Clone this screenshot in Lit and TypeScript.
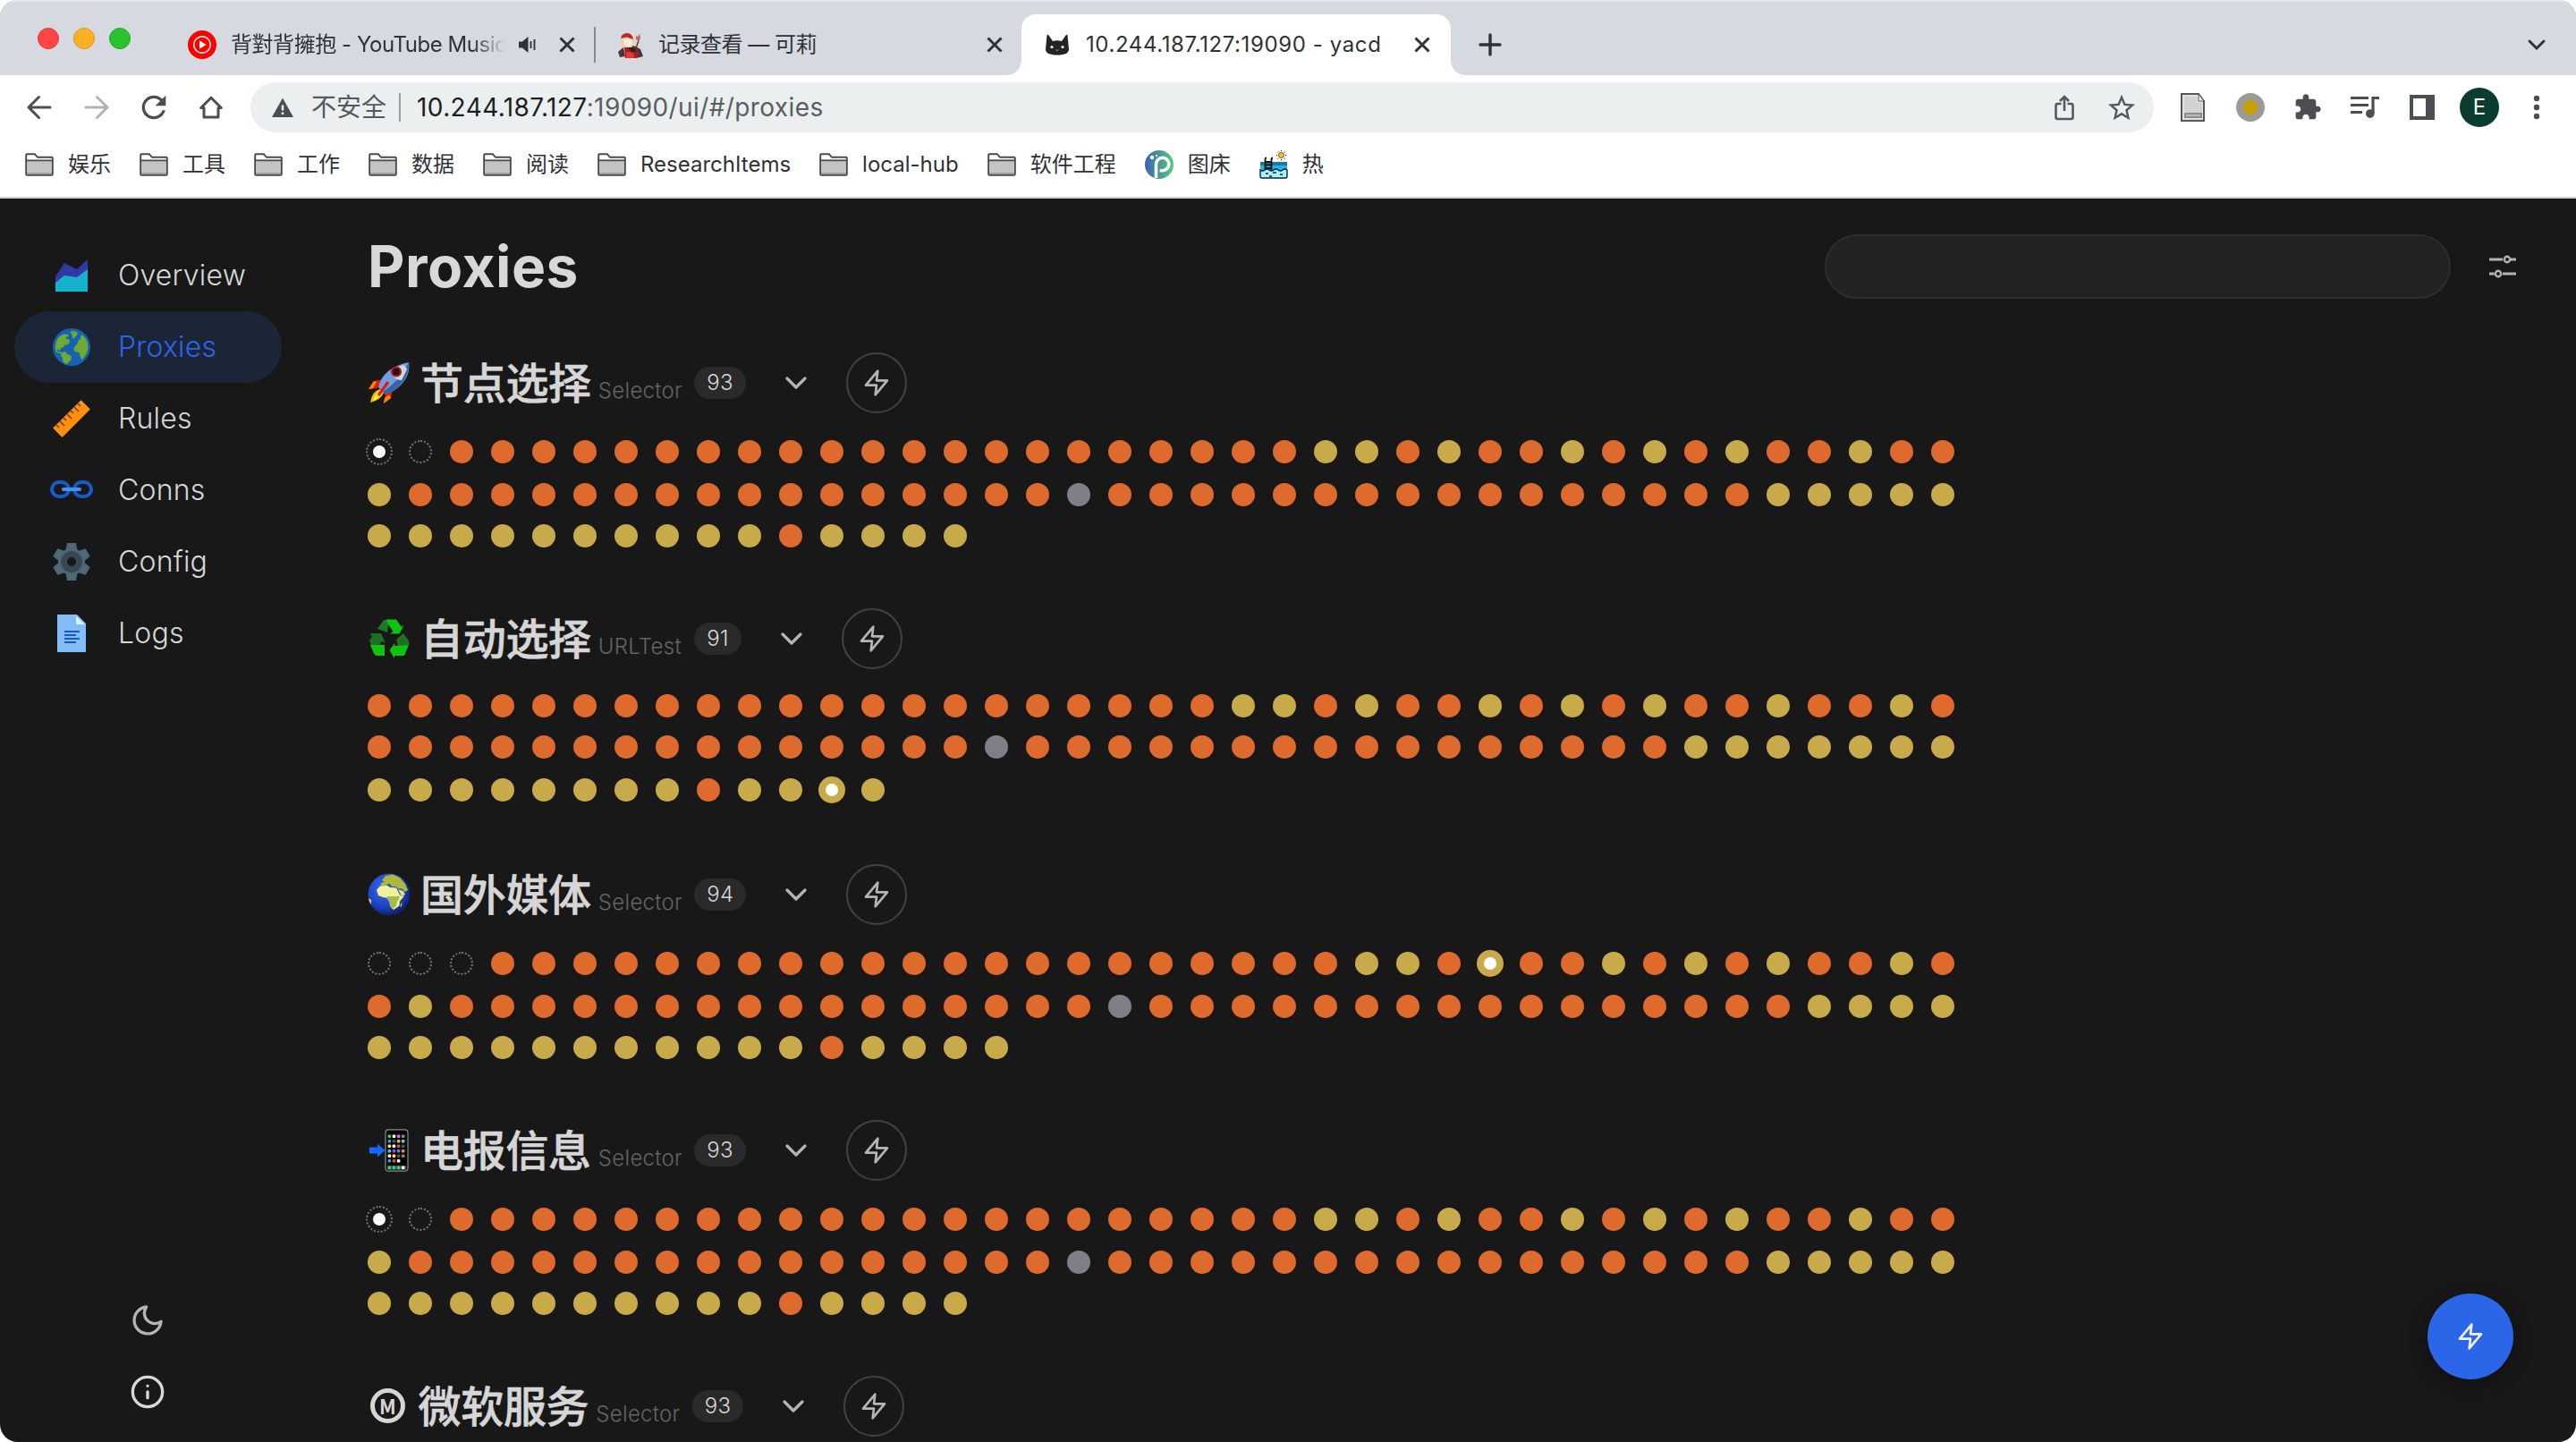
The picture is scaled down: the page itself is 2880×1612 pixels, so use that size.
import { LitElement, html, css, svg, nothing } from "lit";
import { customElement, property } from "lit/decorators.js";
import { classMap } from "lit/directives/class-map.js";

type NodeState = "slow" | "medium" | "dead" | "unknown";

interface ProxyGroup {
  emoji: string;
  name: string;
  kind: string;
  nodes: NodeState[];
  selected: number;
  tight?: boolean;
}

const PER_ROW = 39;
const CODES: Record<string, NodeState> = { o: "slow", y: "medium", x: "dead", "-": "unknown" };

/* Latency of the real servers, shared by every group. */
const SERVERS =
  "o".repeat(21) + "yyoyooyoyoyooyooy" + "o".repeat(16) + "x" + "o".repeat(16) + "y".repeat(15) + "oyyyy";

const expand = (codes: string): NodeState[] => [...codes].map((c) => CODES[c]);

const GROUPS: ProxyGroup[] = [
  { emoji: "rocket", name: "节点选择", kind: "Selector", nodes: expand("--" + SERVERS), selected: 0 },
  { emoji: "recycle", name: "自动选择", kind: "URLTest", nodes: expand(SERVERS), selected: 89, tight: true },
  { emoji: "earth", name: "国外媒体", kind: "Selector", nodes: expand("---" + SERVERS), selected: 27 },
  { emoji: "phone", name: "电报信息", kind: "Selector", nodes: expand("--" + SERVERS), selected: 0 },
  { emoji: "m", name: "微软服务", kind: "Selector", nodes: expand("--" + SERVERS), selected: 0 },
];

const NAV = [
  { icon: "area", label: "Overview" },
  { icon: "globe", label: "Proxies" },
  { icon: "ruler", label: "Rules" },
  { icon: "link", label: "Conns" },
  { icon: "gear", label: "Config" },
  { icon: "doc", label: "Logs" },
];

const BOOKMARKS = [
  { icon: "folder", label: "娱乐" },
  { icon: "folder", label: "工具" },
  { icon: "folder", label: "工作" },
  { icon: "folder", label: "数据" },
  { icon: "folder", label: "阅读" },
  { icon: "folder", label: "ResearchItems" },
  { icon: "folder", label: "local-hub" },
  { icon: "folder", label: "软件工程" },
  { icon: "picbed", label: "图床" },
  { icon: "pool", label: "热" },
];

const frame = (w: number, h: number, box: string, body: unknown) =>
  html`<svg class="ic" width=${w} height=${h} viewBox=${box} fill="none">${body}</svg>`;

const zap = (color: string) =>
  frame(32, 32, "0 0 24 24", svg`<path d="M13 2 3 14h9l-1 8 10-12h-9z" stroke=${color} stroke-width="2" stroke-linejoin="round"/>`);

const chevron = frame(40, 40, "0 0 24 24", svg`<path d="m6 9 6 6 6-6" stroke="#b4b4b4" stroke-width="2" stroke-linecap="round" stroke-linejoin="round"/>`);

const cross = frame(24, 24, "0 0 24 24", svg`<path d="M4.500 4.500l15 15M19.500 4.500l-15 15" stroke="#2f3236" stroke-width="3"/>`);

const gearTeeth = [0, 60, 120, 180, 240, 300];
const phoneDots = [
  ["#34d84a", "#fff", "#e070e8", "#888"],
  ["#2a9df4", "#555", "#e8b070", "#46d6f0"],
  ["#ffe83a", "#fff", "#f04a3a", "#555"],
  ["#2ad4e8", "#e02ad8", "#2a9df4", "#ff8a1a"],
  ["#fff", "#ffe83a", "#555", "#888"],
  ["#2a9df4", "#f04a3a", "#fff", "#000"],
];

const ICONS: Record<string, () => unknown> = {
  area: () => frame(48, 48, "0 0 48 48", svg`
    <path d="M42 37H6V25L16 10l14 7L42 6z" fill="#3038a6"/>
    <path d="M42 42H6V32l10-8 14 2 12-9z" fill="#18b1cd"/>`),
  globe: () => frame(48, 48, "0 0 48 48", svg`
    <circle cx="24" cy="24" r="21" fill="#1463b2"/>
    <path d="M6 26C5 17 10 10 17 9.500l3 .5 1 2-3 .5 0 2.500 3 0 1 3-2 3-4 1-1 2-3 1-1 3-2-1.500-1.500 1 1.500 2 4 .5 0 1.500-4-.8-2.500-2z" fill="#6caa35"/>
    <path d="M13 30l4-1 2.500 3 4.500 2-.5 4.500-2.500 2-1.500 2-3.500 0-2-4-.5-3-1.500-2z" fill="#6caa35"/>
    <path d="M22.500 6.500l5-.5 3.500 2-1 3-4.500 4-1-4z" fill="#6caa35"/>
    <path d="M35.500 10c5 4 7.500 9 7 15-.5 5-3 9-7 13.500l-2-4.500-1-4-5-1-1-4 4-5 1.500-4 2.500-1-1-2z" fill="#6caa35"/>`),
  ruler: () => frame(48, 48, "0 0 48 48", svg`
    <path d="M34.600 3.200 44.900 13.500 13.500 44.900 3.200 34.600z" fill="#ff8f0c"/>
    <path d="M7 31l3 3M11 27l5 5M15 23l3 3M19 19l5 5M23 15l3 3M27 11l5 5M31 7l3 3" stroke="#8a4e00" stroke-width="1.800"/>`),
  link: () => frame(48, 48, "0 0 48 48", svg`
    <rect x="2" y="15" width="19" height="16" rx="8" stroke="#165bc8" stroke-width="4"/>
    <rect x="27" y="15" width="19" height="16" rx="8" stroke="#165bc8" stroke-width="4"/>
    <path d="M15 23h18" stroke="#3a97f2" stroke-width="4" stroke-linecap="round"/>`),
  gear: () => frame(48, 48, "0 0 48 48", svg`
    ${gearTeeth.map((a) => svg`<path d="M19 3h10l1.500 9h-13z" fill="#4f6876" transform=${`rotate(${a} 24 24)`}/>`)}
    <circle cx="24" cy="24" r="10.500" stroke="#4f6876" stroke-width="9"/>
    <circle cx="24" cy="24" r="8.500" stroke="#374853" stroke-width="7"/>`),
  doc: () => frame(48, 48, "0 0 48 48", svg`
    <path d="M40 45H8V3h22l10 10z" fill="#82bdf8"/><path d="M38.500 14H29V4.500z" fill="#dcf2fe"/>
    <path d="M16 22h17M16 26h13M16 30h17M16 34h13" stroke="#1859c8" stroke-width="2"/>`),
  folder: () => frame(32, 26, "0 0 32 26", svg`
    <path d="M1.200 23.500V2.200c0-.6.4-1 1-1h8.600l3.200 3.600h15.800c.6 0 1 .4 1 1v17.700c0 .7-.4 1.200-1 1.200H2.200c-.6 0-1-.5-1-1.200z" fill="#fff" stroke="#4a4b4d" stroke-width="2"/>
    <path d="M2 8.500h28V22H2z" fill="#c2c3c4"/><path d="M2 22h28v2H2z" fill="#9c9d9e"/>
    <path d="M1 8.300h30" stroke="#4a4b4d" stroke-width="1.800"/>`),
  picbed: () => frame(32, 32, "0 0 32 32", svg`
    <defs><linearGradient id="pb" x1="0" y1="0" x2="1" y2="0"><stop offset="0" stop-color="#3d62b8"/><stop offset="1" stop-color="#55cf72"/></linearGradient></defs>
    <circle cx="16" cy="16" r="16" fill="url(#pb)"/>
    <path d="M12.500 31V15.500a7.200 7.200 0 1 1 7.200 7.200h-3" stroke="#fff" stroke-width="3.600"/>
    <circle cx="8" cy="8" r="2.200" fill="#fff"/><circle cx="13" cy="6" r="1" fill="#fff"/>`),
  pool: () => frame(32, 32, "0 0 32 32", svg`
    <path d="M1 14h30v9H1z" fill="#1fb4f2"/><path d="M1 13h30v4H1z" fill="#167c97"/>
    <path d="M1 22q2.500 2 5 0t5 0 5 0 5 0 5 0 5 0v7q0 2-2 2H3q-2 0-2-2z" fill="#a8f0fb" stroke="#0d2430" stroke-width="1.400"/>
    <path d="M7 26h3M15 25h4M23 27h3M11 29h3" stroke="#0d2430" stroke-width="1.300"/>
    <path d="M6.500 22V10q0-1.500 1.500-1.500M13.500 22V10q0-1.500 1.500-1.500M6.500 13h7M6.500 16.500h7M6.500 20h7" stroke="#151515" stroke-width="1.800"/>
    <circle cx="24.500" cy="5.500" r="3" fill="#fcc21b" stroke="#333" stroke-width=".8"/>
    <path d="M24.500 0v1M24.500 10v1.200M19 5.500h1M29 5.500h1M20.700 1.700l.7.7M27.800 8.800l.7.7M28.400 1.700l-.7.7M21.300 8.800l-.7.7" stroke="#222" stroke-width="1.100"/>`),
  rocket: () => frame(48, 48, "0 0 48 48", svg`
    <path d="M17 20 7 22 1 31l10-1zM28 31l-2 10-8 6 2-11z" fill="#e8150c"/>
    <path d="M7 22 1 31l5-1 4-7zM26 41l-8 6 1-6 5-4z" fill="#ff8a00"/>
    <path d="M14 31q-9 2-11 15 12-3 15-11z" fill="#ffb800"/><path d="M14 32q-6 4-8 12 7-3 10-9z" fill="#fff34a"/>
    <path d="M46 1q3 18-17 32l-9 4-8-8q5-22 34-28z" fill="#6f9fdc"/>
    <path d="M46 1q2 17-17 32l-9 4-3-3Q36 22 46 1z" fill="#3565a8"/>
    <path d="M40 4q4 3 4 5l-6 12q-6 1-12-8 6-7 14-9z" fill="#cfdae0"/>
    <circle cx="32" cy="11.500" r="5" fill="#16181c" stroke="#c41414" stroke-width="2.200"/>
    <path d="M23 23 12 38" stroke="#e8150c" stroke-width="3"/>`),
  recycle: () => frame(48, 48, "0 0 48 48", svg`
    <path d="M18 3h6l-2 14-11-4z" fill="#1c7a24"/><path d="M21 2.500h11l5.500 8 3-1.500-5 9.500H25l3.500-2.500-6-9z" fill="#0dc40d"/>
    <path d="M3 18h12l5 11-4-2-4 5H4l-2-6 3-4z" fill="#1c7023"/><path d="M3 31h16v12h-8q-3 0-4-2.500z" fill="#0dc40d"/>
    <path d="M32 25l8-7 6 8q1 4-1 6H34z" fill="#1c7023"/><path d="M46 31l-5 12H30v3l-5.500-9 5.500-8v3z" fill="#0dc40d"/>`),
  earth: () => frame(48, 48, "0 0 48 48", svg`
    <defs><radialGradient id="sea" cx=".4" cy=".35" r=".65"><stop offset="0" stop-color="#3d6df0"/><stop offset=".7" stop-color="#1d3fc4"/><stop offset="1" stop-color="#12206a"/></radialGradient></defs>
    <circle cx="24" cy="24" r="23.500" fill="url(#sea)"/>
    <path d="M16 8l4-5 8-1.500 8 3.500 6 7 3 7-3 2-3-3-4-1-3 1-3-3-4 0-3-2-3 2-4-1 0-3 4-1z" fill="#b0b83c"/>
    <path d="M22 12l3 0 2 3 4 0 3 2-5 1-6-2z" fill="#2a55d8"/>
    <path d="M10 19l4-4.500 8-.5 3 2 7 .5 3 6 2 3 4 0-5 6-.5 5-3.500 2.500-3 2-3-3-1-5-1.500-5-6.500-1-5-2z" fill="#f0f29a"/>
    <path d="M22 26h14l-1 3-2.500 4-.5 4-4.500 3-2.500-3-1-5-2-3z" fill="#a3ba4c"/>
    <path d="M34 18l6 2 2 4-4 2z" fill="#e3dc80"/>
    <path d="M1 28l3 2 0 5-2-3zM37 35l1.500-3-.5 5-1.500 1z" fill="#d8d83a"/>`),
  phone: () => frame(48, 48, "0 0 48 48", svg`
    <rect x="20" y=".8" width="25" height="46.400" rx="3.500" fill="#050505" stroke="#8a8a8a" stroke-width="1.200"/>
    ${phoneDots.map((row, r) => row.map((c, i) => svg`<rect x=${22.6 + i * 5.1} y=${6.5 + r * 5.5} width="3.600" height="3.600" rx="1" fill=${c}/>`))}
    <path d="M22 41h21.500v5H22z" fill="#39433c"/>
    ${["#34d84a", "#2ac4d8", "#34d84a", "#fff"].map((c, i) => svg`<rect x=${22.6 + i * 5.1} y="41.500" width="3.600" height="3.600" rx="1" fill=${c}/>`)}
    <path d="M2 20.500h9v-4l8.500 7.500-8.500 7.500v-4H2z" fill="#1667ff"/>`),
};

@customElement("proxy-group")
export class ProxyGroupView extends LitElement {
  @property({ attribute: false }) group!: ProxyGroup;

  static styles = css`
    :host { display: block; height: 286px; flex: none; }
    .ic { display: block; flex: none; }
    .title { display: flex; align-items: center; height: 68px; }
    .mark { display: flex; width: 48px; height: 48px; margin-right: 11px; }
    .mark.m { width: 45.500px; }
    .ring {
      box-sizing: border-box; width: 39px; height: 39px; margin: 4px 0 0 3px; border: 5px solid #d5d5d5; border-radius: 50%;
      color: #d5d5d5; font: 700 22px/29px "Noto Sans CJK SC", Inter, sans-serif; text-align: center;
    }
    .name { margin-bottom: 7px; color: #d6d6d6; font: 500 48px/68px "Noto Sans CJK SC", sans-serif; letter-spacing: -.3px; -webkit-text-stroke: .6px #d6d6d6; }
    .kind { margin: 17px 0 0 8px; width: 107.500px; color: #646464; font-size: 24px; line-height: 30px; letter-spacing: .3px; font-weight: 300; }
    .count {
      box-sizing: border-box; height: 36px; padding: 0 14px; border-radius: 18px; background: #2a2a2a; color: #d8d8d8;
      font-size: 24px; line-height: 36px; font-weight: 300; letter-spacing: .3px;
    }
    .open { margin: 0 36px; }
    .test { box-sizing: border-box; display: grid; place-items: center; width: 68px; height: 68px; border: 2px solid #424242; border-radius: 50%; }
    .rows { display: grid; grid-template-rows: repeat(3, 26px); padding-top: 30px; }
    .row { display: flex; gap: 20px; }
    .row:nth-child(2) { margin-top: 22px; }
    .row:nth-child(3) { margin-top: 42px; }
    .tight { padding-top: 28px; }
    .tight .row:nth-child(2) { margin-top: 20px; }
    .dot { box-sizing: border-box; display: grid; place-items: center; flex: none; width: 26px; height: 26px; border-radius: 50%; }
    .slow { background: #de6a2e; }
    .medium { background: #c9aa4b; }
    .dead { background: #7f7f87; }
    .unknown { border: 2px dotted #777; }
    .now { width: 30px; height: 30px; margin: -2px; }
    .pip { width: 14px; height: 14px; border-radius: 50%; background: #fff; }
  `;

  render() {
    const g = this.group;
    const rows: NodeState[][] = [];
    for (let i = 0; i < g.nodes.length; i += PER_ROW) rows.push(g.nodes.slice(i, i + PER_ROW));
    return html`
      <div class="title">
        <span class=${classMap({ mark: true, m: g.emoji === "m" })}>
          ${g.emoji === "m" ? html`<span class="ring">M</span>` : ICONS[g.emoji]()}
        </span>
        <span class="name">${g.name}</span>
        <span class="kind">${g.kind}</span>
        <span class="count">${g.nodes.length}</span>
        <span class="open">${chevron}</span>
        <span class="test">${zap("#b4b4b4")}</span>
      </div>
      <div class=${classMap({ rows: true, tight: !!g.tight })}>
        ${rows.map((row, r) => html`<div class="row">
          ${row.map((state, i) => {
            const now = r * PER_ROW + i === g.selected;
            return html`<span class=${classMap({ dot: true, [state]: true, now })}>${now ? html`<span class="pip"></span>` : nothing}</span>`;
          })}
        </div>`)}
      </div>`;
  }
}

@customElement("browser-chrome")
export class BrowserChrome extends LitElement {
  static styles = css`
    :host {
      box-sizing: border-box; display: block; height: 222px; flex: none; background: #fff; border-bottom: 2px solid #cbcccd;
      color: #2f3236; font: 24px/32px Inter, "Noto Sans CJK SC", sans-serif;
    }
    .ic { display: block; flex: none; }
    .strip { box-sizing: border-box; display: flex; align-items: center; height: 84px; padding-top: 14px; background: #d6d9e0; border-top: 2px solid #e8e9ec; }
    .lights { display: flex; gap: 16px; padding: 0 64px 14px 42px; }
    .light { box-sizing: border-box; width: 24px; height: 24px; border-radius: 50%; background: #ff4646; border: 1px solid #e0383a; }
    .light.min { background: #fdb024; border-color: #dd961c; }
    .light.max { background: #28c32e; border-color: #1fa823; }
    .tab { display: flex; align-items: center; flex: none; }
    .one { width: 454px; }
    .two { width: 452px; }
    .text { white-space: nowrap; overflow: hidden; }
    .one .text { width: 307px; margin: 0 14px 0 16px; letter-spacing: -.45px; mask-image: linear-gradient(90deg, #000 88%, transparent 100%); }
    .one .close { margin-left: 21px; }
    .two .text { width: 351px; margin-left: 16px; letter-spacing: -.5px; }
    .two .close { margin-left: 13px; }
    .sep { width: 2px; height: 40px; margin-right: 24px; background: #86898e; }
    .live { position: relative; box-sizing: border-box; width: 480px; height: 68px; padding-left: 26px; border-radius: 16px 16px 0 0; background: #fff; margin-right: 30px; }
    .live::before, .live::after { content: ""; position: absolute; bottom: 0; width: 16px; height: 16px; background: radial-gradient(circle at 0 0, transparent 15.500px, #fff 16px); }
    .live::before { left: -16px; }
    .live::after { right: -16px; transform: scaleX(-1); }
    .live .text { width: 346px; margin: 0 18px; letter-spacing: .6px; }
    .more { margin-left: auto; padding-right: 30px; }
    .bar { display: flex; align-items: center; height: 72px; }
    .nav { display: flex; gap: 24px; padding-left: 24px; width: 256px; }
    .omni { box-sizing: border-box; display: flex; align-items: center; width: 2128px; height: 56px; padding: 0 18px 0 24px; border-radius: 28px; background: #ebeff0; font-size: 28px; line-height: 40px; }
    .warn { margin: 0 14px 0 20px; color: #55585d; }
    .rule { width: 2px; height: 32px; margin-right: 18px; background: #9a9da1; }
    .url { color: #5a5d61; letter-spacing: .4px; }
    .host { color: #1c1e21; }
    .acts { display: flex; gap: 28px; margin-left: auto; }
    .ext { display: flex; align-items: center; justify-content: space-between; width: 424px; margin-left: 24px; }
    .cell { display: grid; place-items: center; width: 40px; height: 44px; }
    .who { display: grid; place-items: center; width: 44px; height: 44px; border-radius: 50%; background: #0a3c30; color: #fff; font: 24px/44px Inter, sans-serif; margin: 0 -2px; }
    .marks { display: flex; gap: 32px; height: 56px; align-items: center; padding: 0 28px; }
    .mark { display: flex; align-items: center; gap: 16px; height: 32px; white-space: nowrap; }
  `;

  render() {
    const ink = "#4b4e53";
    return html`
      <div class="strip">
        <div class="lights"><span class="light"></span><span class="light min"></span><span class="light max"></span></div>
        <div class="tab one">
          ${frame(32, 32, "0 0 32 32", svg`<circle cx="16" cy="16" r="16" fill="#f00"/><circle cx="16" cy="16" r="9.300" stroke="#fff" stroke-width="1.400"/><path d="m13 11.300 7.500 4.700-7.500 4.700z" fill="#fff"/>`)}
          <span class="text">背對背擁抱 - YouTube Music</span>
          ${frame(22, 20, "0 0 22 20", svg`<path d="M1 6.500h4L11.500 1v18L5 13.500H1z" fill="#2f3236"/><path d="M14.500 6v8M18.500 4v12" stroke="#2f3236" stroke-width="1.800"/>`)}
          <span class="close">${cross}</span>
        </div>
        <span class="sep"></span>
        <div class="tab two">
          ${frame(30, 32, "0 0 30 32", svg`
            <path d="M7 19 1 24l2 6 6-1zM19 17l7 4 3 8-8 2z" fill="#4a3438"/>
            <path d="M8 18q6-3 12 0l4 8-2 5H9z" fill="#a3201f"/><path d="M10 24h8l1 7h-9z" fill="#e23a30"/>
            <path d="M4 9q-1 7 2 10l10 0q4-4 2-10z" fill="#ecd0a6"/><path d="M7 10h9l1 5-4 4-5-2z" fill="#fbeadb"/>
            <path d="M4 9Q5 3 11 3t7 7l-7-2.500z" fill="#c32725"/><path d="M13 1l3-1-1 3z" fill="#e9c9a0"/>
            <path d="M21 20 25 8" stroke="#6a3a2c" stroke-width="1.500"/><path d="M21 6l2 1 2-3 1 4-2 4-3-2z" fill="#a8735a"/>
            <path d="M12 19h7l3 4-6 2z" fill="#3a2126"/>`)}
          <span class="text">记录查看 — 可莉</span>
          <span class="close">${cross}</span>
        </div>
        <div class="tab live">
          ${frame(28, 24, "0 0 28 24", svg`
            <path d="M2.500 1.500Q3 0 4.500 1.500L9 8q5-1.300 10 0l4.500-6.500Q25 0 25.500 1.500L27 17q0 6.500-13 6.500T1 17z" fill="#232426"/>
            <circle cx="8" cy="14.500" r="1.600" fill="#f4f4f4"/><circle cx="20" cy="14.500" r="1.600" fill="#f4f4f4"/><path d="M12.500 17.500l1.500 1 1.500-1" stroke="#777" stroke-width="1.200"/>`)}
          <span class="text">10.244.187.127:19090 - yacd</span>
          ${cross}
        </div>
        ${frame(28, 28, "0 0 28 28", svg`<path d="M14 3v22M3 14h22" stroke="#2f3236" stroke-width="3.400" stroke-linecap="round"/>`)}
        <span class="more">${frame(28, 28, "0 0 28 28", svg`<path d="m6 10 8 8 8-8" stroke="#2f3236" stroke-width="3" stroke-linecap="round"/>`)}</span>
      </div>
      <div class="bar">
        <div class="nav">
          ${frame(40, 40, "0 0 40 40", svg`<path d="M32 20H8M19.500 8.500 8 20l11.500 11.500" stroke=${ink} stroke-width="3" stroke-linecap="round" stroke-linejoin="round"/>`)}
          ${frame(40, 40, "0 0 40 40", svg`<path d="M8 20h24M20.500 8.500 32 20 20.500 31.500" stroke="#b1b3b6" stroke-width="3" stroke-linecap="round" stroke-linejoin="round"/>`)}
          ${frame(40, 40, "0 0 24 24", svg`<path d="M17.650 6.350C16.200 4.900 14.210 4 12 4c-4.420 0-7.990 3.580-7.990 8s3.570 8 7.990 8c3.730 0 6.840-2.550 7.730-6h-2.080c-.82 2.330-3.040 4-5.650 4-3.310 0-6-2.690-6-6s2.690-6 6-6c1.660 0 3.140.69 4.220 1.780L13 11h7V4l-2.350 2.350z" fill=${ink}/>`)}
          ${frame(40, 40, "0 0 40 40", svg`<path d="M20 9.200 8.700 20.500H12V31h16V20.500h3.300z" stroke=${ink} stroke-width="3" stroke-linejoin="round"/>`)}
        </div>
        <div class="omni">
          ${frame(24, 24, "0 0 24 24", svg`<path d="M12 1.500 24 23H0z" fill="#4b4e53"/><path d="M12 9.500v6M12 17.500v2.600" stroke="#ebeff0" stroke-width="2.500"/>`)}
          <span class="warn">不安全</span>
          <span class="rule"></span>
          <span class="url"><span class="host">10.244.187.127</span>:19090/ui/#/proxies</span>
          <div class="acts">
            ${frame(36, 36, "0 0 36 36", svg`<path d="M14.500 14H10.500q-2 0-2 2v13q0 2 2 2h15q2 0 2-2V16q0-2-2-2h-4M18 22V6.500M13 11l5-5 5 5" stroke="#55585d" stroke-width="2.600"/>`)}
            ${frame(36, 36, "0 0 24 23", svg`<path d="M22 9.240l-7.190-.62L12 2 9.190 8.630 2 9.240l5.460 4.730L5.820 21 12 17.270 18.180 21l-1.630-7.030L22 9.240zM12 15.400l-3.760 2.270 1-4.280-3.320-2.880 4.380-.38L12 6.100l1.710 4.040 4.380.38-3.320 2.880 1 4.280L12 15.400z" fill="#55585d"/>`)}
          </div>
        </div>
        <div class="ext">
          <span class="cell">${frame(32, 34, "0 0 32 34", svg`
            <path d="M3 2h19l6 8v22H3z" fill="#e2e2e2" stroke="#55585b" stroke-width="2"/><path d="M6 5h14v7h6v17H6z" fill="#d2d2d2"/>
            <path d="M22 2v8h6z" fill="#f7f7f7" stroke="#55585b" stroke-width="1"/><path d="M6 23h20v6H6z" fill="#8e8e8e"/><path d="M8 26h16" stroke="#c9c9c9" stroke-width="1.500"/>`)}</span>
          <span class="cell">${frame(32, 32, "0 0 32 32", svg`<circle cx="16" cy="16" r="16" fill="#9a9a9a"/><circle cx="16" cy="16" r="8.500" fill="#c49f0c"/>`)}</span>
          <span class="cell">${frame(32, 32, "0 0 24 24", svg`<path d="M20.500 11H19V7c0-1.100-.9-2-2-2h-4V3.500C13 2.120 11.880 1 10.500 1S8 2.120 8 3.500V5H4c-1.100 0-1.990.9-1.990 2v3.800H3.500c1.490 0 2.700 1.210 2.700 2.700s-1.210 2.700-2.700 2.700H2V20c0 1.100.9 2 2 2h3.800v-1.500c0-1.490 1.210-2.700 2.700-2.700 1.490 0 2.700 1.210 2.700 2.700V22H17c1.100 0 2-.9 2-2v-4h1.500c1.380 0 2.500-1.120 2.500-2.500S21.880 11 20.500 11z" fill=${ink}/>`)}</span>
          <span class="cell">${frame(34, 30, "0 0 34 30", svg`<path d="M1 4.500h20M1 12.500h20M1 20.500h13" stroke=${ink} stroke-width="3"/><path d="M26 22V4.500h7" stroke=${ink} stroke-width="3.200"/><circle cx="22.800" cy="22" r="4.800" fill=${ink}/>`)}</span>
          <span class="cell">${frame(28, 28, "0 0 28 28", svg`<path d="M0 0h28v28H0zM4 4v20h14V4z" fill=${ink} fill-rule="evenodd"/>`)}</span>
          <span class="who">E</span>
          <span class="cell">${frame(8, 28, "0 0 8 28", svg`<circle cx="4" cy="4" r="3.200" fill=${ink}/><circle cx="4" cy="14" r="3.200" fill=${ink}/><circle cx="4" cy="24" r="3.200" fill=${ink}/>`)}</span>
        </div>
      </div>
      <div class="marks">
        ${BOOKMARKS.map((b) => html`<span class="mark">${ICONS[b.icon]()}<span>${b.label}</span></span>`)}
      </div>`;
  }
}

@customElement("app-root")
export class AppRoot extends LitElement {
  static styles = css`
    :host { display: block; width: 2880px; height: 1612px; background: #fff; overflow: hidden; font-family: Inter, "Noto Sans CJK SC", sans-serif; }
    .window { position: relative; display: flex; flex-direction: column; height: 1612px; border-radius: 20px; overflow: hidden; background: #181818; }
    .ic { display: block; flex: none; }
    .body { display: flex; flex: 1; min-height: 0; }
    .side { box-sizing: border-box; display: flex; flex-direction: column; width: 330px; flex: none; padding: 46px 15px 36px 16px; }
    .item { box-sizing: border-box; display: flex; align-items: center; gap: 28px; height: 80px; padding-left: 40px; border-radius: 40px; color: #d6d6d6; font-size: 32px; line-height: 40px; font-weight: 300; letter-spacing: .2px; }
    .item.on { background: #1c2536; color: #2b64ea; }
    .tools { display: flex; flex-direction: column; align-items: center; gap: 40px; margin-top: auto; padding-right: 1px; }
    .main { display: flex; flex-direction: column; flex: 1; min-width: 0; padding: 40px 62px 0 81px; overflow: hidden; }
    .head { display: flex; align-items: center; height: 72px; margin-bottom: 60px; flex: none; }
    .h { flex: 1; margin: 0; color: #d8d8d8; font-size: 64px; line-height: 72px; font-weight: 700; letter-spacing: .5px; }
    .search { box-sizing: border-box; width: 700px; height: 72px; border: 2px solid #2e2e2e; border-radius: 36px; background: #222224; margin-right: 38px; }
    .fab { position: absolute; left: 2714px; top: 1446px; display: grid; place-items: center; width: 96px; height: 96px; border-radius: 50%; background: #2b65e8; box-shadow: 0 4px 20px rgba(0, 0, 0, .4); }
  `;

  render() {
    return html`
      <div class="window">
        <browser-chrome></browser-chrome>
        <div class="body">
          <nav class="side">
            ${NAV.map((n) => html`<div class=${classMap({ item: true, on: n.label === "Proxies" })}>${ICONS[n.icon]()}<span>${n.label}</span></div>`)}
            <div class="tools">
              ${frame(40, 40, "0 0 24 24", svg`<path d="M21 12.790A9 9 0 1 1 11.210 3 7 7 0 0 0 21 12.790z" stroke="#b4b4b4" stroke-width="2" stroke-linejoin="round"/>`)}
              ${frame(40, 40, "0 0 24 24", svg`<circle cx="12" cy="12" r="10" stroke="#d8d8d8" stroke-width="2"/><path d="M12 16v-4M12 8h.01" stroke="#d8d8d8" stroke-width="2" stroke-linecap="round"/>`)}
            </div>
          </nav>
          <main class="main">
            <header class="head">
              <h1 class="h">Proxies</h1>
              <div class="search"></div>
              ${frame(40, 32, "0 0 40 32", svg`<path d="M5 8h15M28.500 8H35M5 24h5.500M20 24h15" stroke="#b4b4b4" stroke-width="3"/><circle cx="25" cy="8" r="3.200" stroke="#b4b4b4" stroke-width="2.400"/><circle cx="15" cy="24" r="3.200" stroke="#b4b4b4" stroke-width="2.400"/>`)}
            </header>
            ${GROUPS.map((g) => html`<proxy-group .group=${g}></proxy-group>`)}
          </main>
        </div>
        <div class="fab">${zap("#eef1f8")}</div>
      </div>`;
  }
}
